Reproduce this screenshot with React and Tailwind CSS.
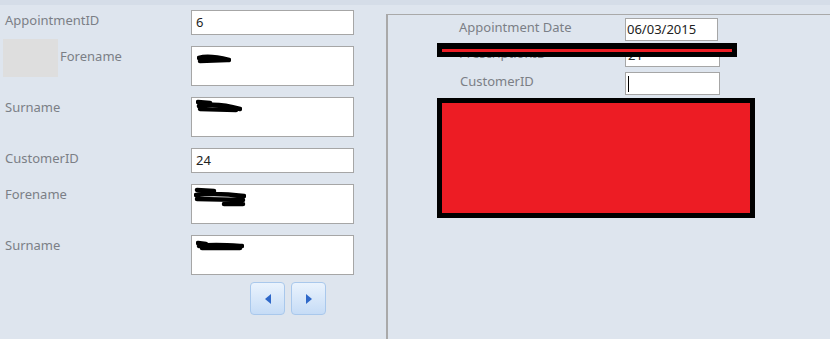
import React from "react";

const font = { fontFamily: '"Noto Sans", "Open Sans", sans-serif' };

const Scribble = ({ w = 40, h = 12, d }) => (
  <svg width={w} height={h} viewBox={`0 0 ${w} ${h}`} className="block">
    <path d={d} stroke="#000" strokeWidth="4.5" fill="none" strokeLinecap="round" strokeLinejoin="round" />
  </svg>
);

const Field = ({ label, value, top }) => (
  <div className="flex" style={{ marginTop: top }}>
    <div className="w-[191px] pl-[5px] text-[13px] text-[#7b7f86] leading-[20px]">{label}</div>
    <div className="w-[163px] h-[25px] bg-white border border-[#a6a6a6] px-[4px] text-[13px] text-[#222] leading-[22px]">
      {value}
    </div>
  </div>
);

const NavButton = ({ dir }) => (
  <button className="w-[35px] h-[33px] rounded-[4px] border border-[#a9c8ec] bg-gradient-to-b from-[#eaf3fd] to-[#c6dcf6] flex items-center justify-center">
    <svg width="8" height="12" viewBox="0 0 8 12">
      {dir === "left" ? (
        <path d="M7 1 L1 6 L7 11 Z" fill="#2e68c9" />
      ) : (
        <path d="M1 1 L7 6 L1 11 Z" fill="#2e68c9" />
      )}
    </svg>
  </button>
);

export default function App() {
  return (
    <div className="w-[830px] h-[339px] bg-[#dee5ee] overflow-hidden relative" style={font}>
      <div className="h-[5px] bg-[#d5dde8]" />
      <div className="flex">
        {/* left column */}
        <div className="w-[386px] shrink-0">
          <Field label="AppointmentID" value="6" top={5} />
          <div className="flex mt-[11px]">
            <div className="w-[191px] flex items-start">
              <div className="w-[55px] h-[38px] bg-[#dedede] ml-[3px] -mt-[7px]" />
              <div className="pl-[2px] text-[13px] text-[#7b7f86] leading-[20px]">Forename</div>
            </div>
            <div className="w-[163px] h-[40px] bg-white border border-[#a6a6a6] px-[5px] pt-[7px]">
              <Scribble w={34} h={10} d="M2 4 C8 2 20 3 32 6 M3 7 L30 6" />
            </div>
          </div>
          <div className="flex mt-[11px]">
            <div className="w-[191px] pl-[5px] text-[13px] text-[#7b7f86] leading-[20px]">Surname</div>
            <div className="w-[163px] h-[40px] bg-white border border-[#a6a6a6] px-[4px] pt-[1px]">
              <Scribble w={46} h={14} d="M2 3 L14 4 M3 7 C14 5 30 6 44 10 M4 10 L40 11" />
            </div>
          </div>
          <Field label="CustomerID" value="24" top={11} />
          <div className="flex mt-[11px]">
            <div className="w-[191px] pl-[5px] text-[13px] text-[#7b7f86] leading-[20px]">Forename</div>
            <div className="w-[163px] h-[40px] bg-white border border-[#a6a6a6] px-[2px] pt-[2px]">
              <Scribble w={52} h={20} d="M3 3 L20 4 M2 8 C18 6 34 7 50 9 M3 12 L49 13 M30 17 L49 17" />
            </div>
          </div>
          <div className="flex mt-[11px]">
            <div className="w-[191px] pl-[5px] text-[13px] text-[#7b7f86] leading-[20px]">Surname</div>
            <div className="w-[163px] h-[40px] bg-white border border-[#a6a6a6] px-[4px] pt-[3px]">
              <Scribble w={48} h={12} d="M2 4 L10 5 M3 7 C16 5 30 6 46 7 M6 9 L44 9" />
            </div>
          </div>
          <div className="flex gap-[6px] pl-[250px] mt-[7px]">
            <NavButton dir="left" />
            <NavButton dir="right" />
          </div>
        </div>

        {/* right panel */}
        <div className="flex-1 mt-[9px] h-[330px] border-l-2 border-t border-[#a9a9a9] pt-[3px]">
          <div className="flex items-center">
            <div className="w-[237px] pl-[71px] pb-[4px] text-[13px] text-[#7b7f86]">Appointment Date</div>
            <div className="w-[93px] h-[23px] bg-white border border-[#a6a6a6] px-[1px] text-[13px] text-[#222] leading-[21px]">
              06/03/2015
            </div>
          </div>
          <div className="flex items-center mt-[2px]">
            <div className="w-[237px] pl-[71px] pb-[4px] text-[13px] text-[#7b7f86]">PrescriptionID</div>
            <div className="w-[95px] h-[23px] bg-white border border-[#a6a6a6] px-[2px] text-[13px] text-[#222] leading-[21px]">
              21
            </div>
          </div>
          <div className="flex items-center mt-[5px]">
            <div className="w-[237px] pl-[72px] pb-[4px] text-[13px] text-[#7b7f86]">CustomerID</div>
            <div className="w-[95px] h-[23px] bg-white border border-[#a6a6a6] px-[2px] flex items-center">
              <div className="w-px h-[16px] bg-black" />
            </div>
          </div>
          <div className="ml-[237px] w-[95px] h-[23px] bg-white border border-[#a6a6a6] mt-[3px]" />
        </div>
      </div>

      {/* redaction overlays */}
      <div className="absolute left-[437px] top-[43px] w-[300px] h-[14px] bg-black flex items-center px-[5px]">
        <div className="w-full h-[3px] bg-[#ed1c24]" />
      </div>
      <div className="absolute left-[437px] top-[98px] w-[318px] h-[120px] bg-[#ed1c24] border-[5px] border-black" />
    </div>
  );
}
